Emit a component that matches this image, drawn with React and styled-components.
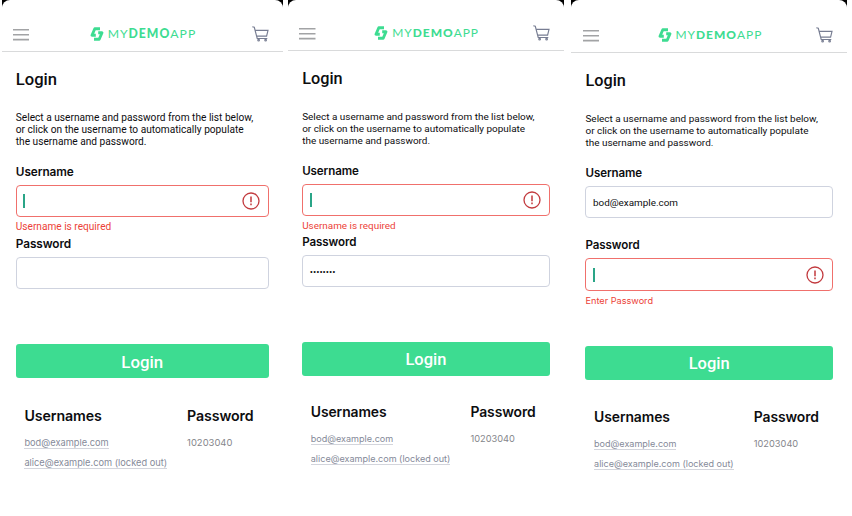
import React from "react";
import styled, { createGlobalStyle, css } from "styled-components";

const GlobalStyle = createGlobalStyle`
  *, *::before, *::after { box-sizing: border-box; }
  body { margin: 0; background: #fff; }
`;

const Gallery = styled.main`
  display: flex;
  width: 852px;
  height: 516px;
  overflow: hidden;
  padding-left: 1.6px;
  background: #fff;
  color: #0d0d0f;
  font-family: Roboto, "Liberation Sans", sans-serif;
`;

/* The em of a phone scales all of its type. */
const Phone = styled.section`
  flex: none;
  width: ${(p) => p.$width}px;
  margin-right: ${(p) => p.$gap}px;
  font-size: ${(p) => p.$scale * 10}px;
  background: linear-gradient(#000 5px, #fff 8px);
`;

const Screen = styled.div`
  display: grid;
  grid-template-columns: 100%;
  grid-template-rows: ${(p) => p.$rows.map((r) => `${r}px`).join(" ")};
  height: 516px;
  background: #fff;
  border-radius: 8px 8px 0 0;
`;

const Header = styled.header`
  display: flex;
  align-items: flex-end;
  justify-content: space-between;
  padding: 0 14px 9.5px 11.3px;
  border-bottom: 1px solid #d9dadb;
  svg { display: block; flex: none; }
`;

const Brand = styled.div`
  display: flex;
  align-items: center;
  gap: 4px;
  height: 14px;
  margin-bottom: 0.5px;
  margin-left: 4.5px;
  color: #3ddc91;
`;

const BrandName = styled.span`
  font: 400 1.22em/14px Lato, sans-serif;
  letter-spacing: 0.082em;
  white-space: nowrap;
  b { font-weight: 900; }
`;

const inset = css`
  margin-left: 14.2px;
  margin-right: 14.4px;
`;

const Title = styled.h1`
  ${inset}
  margin-top: 16.5px;
  margin-bottom: 0;
  font: 500 1.66em/22px Roboto, sans-serif;
`;

const Description = styled.p`
  ${inset}
  margin-top: 5px;
  margin-bottom: 0;
  font-size: 1.016em;
  line-height: 12px;
  white-space: nowrap;
`;

const Label = styled.label`
  ${inset}
  font: 600 1.18em/16px Inter, sans-serif;
  letter-spacing: -0.007em;
`;

const Field = styled.div`
  ${inset}
  display: flex;
  align-items: center;
  justify-content: space-between;
  padding: 0 7.5px 0 6.5px;
  border: 1px solid ${(p) => (p.$invalid ? "#f0706c" : "#cfd3df")};
  border-radius: 4px;
  font-size: 1.01em;
  svg { display: block; }
`;

const Caret = styled.span`
  width: 2px;
  height: 14px;
  background: #2aa587;
`;

const Dots = styled.span`
  font-size: 9.6px;
`;

const ErrorText = styled.span`
  ${inset}
  padding-top: ${(p) => (p.$inter ? 3 : 2.5)}px;
  font: ${(p) => (p.$inter ? "400 0.935em/13px Inter" : "400 1.012em/13px Roboto")}, sans-serif;
  color: #ec3f38;
`;

const LoginButton = styled.button`
  ${inset}
  padding: 2px 0 0;
  border: 0;
  border-radius: 3px;
  background: #3ddc91;
  color: #fff;
  font: 500 1.68em/1 Roboto, sans-serif;
`;

const Accounts = styled.div`
  display: grid;
  grid-template-columns: ${(p) => p.$column}px auto;
  grid-template-rows: ${(p) => p.$head}px 23px 20px;
  justify-content: start;
  align-items: end;
  padding-left: 22.8px;
  font-family: Inter, sans-serif;
`;

const ColumnTitle = styled.h2`
  margin: 0;
  font: 600 1.42em/20px Inter, sans-serif;
  letter-spacing: -0.007em;
`;

const Value = styled.span`
  color: #85868b;
  font-size: 0.945em;
  line-height: 12px;
`;

const AccountLink = styled.a`
  justify-self: start;
  border-bottom: 1px solid #d3d5dc;
  color: #858a99;
  font-size: 0.925em;
  line-height: 11px;
  white-space: nowrap;
`;

const MenuIcon = () => (
  <svg width="16.5" height="14" viewBox="0 0 16.5 14" stroke="#a2a3a5" strokeWidth="1.6">
    <path d="M0 1.8H16.5M0 6.7H16.5M0 11.6H16.5" />
  </svg>
);

const LogoMark = () => (
  <svg width="14" height="14" viewBox="0 0 14 14" fill="none" stroke="currentColor" strokeWidth="2.9" strokeLinejoin="round">
    <path d="M10 1.7H4.8L2 8.2H5.8" />
    <path d="M4 12.3H9.2L12 5.8H8.2" />
  </svg>
);

const CartIcon = () => (
  <svg width="17" height="16" viewBox="0 0 17 16" fill="none" stroke="#777d92" strokeWidth="1.15">
    <path d="M.3 .7 2.3 1.3 5.2 12.5H15.3M3.2 4.4H16L14.6 10.1H4.6" />
    <circle cx="6.6" cy="14.2" r=".8" />
    <circle cx="13.6" cy="14.2" r=".8" />
  </svg>
);

const AlertIcon = () => (
  <svg width="18" height="18" viewBox="0 0 18 18" fill="none" stroke="#c23a3e">
    <circle cx="9" cy="9" r="8" strokeWidth="1.3" />
    <path d="M9 4.6V10.2M9 11.6V13.2" strokeWidth="1.5" />
  </svg>
);

const PHONES = [
  {
    width: 281.4, gap: 5, scale: 1, column: 162.7, head: 48,
    rows: [52, 55, 57, 21, 32, 19, 21, 32, 55, 34],
    userError: "Username is required",
  },
  {
    width: 276, gap: 7.3, scale: 0.98, column: 159.7, head: 46,
    rows: [51, 55, 57, 21, 32, 18, 21, 32, 55, 34],
    userError: "Username is required", password: "••••••••",
  },
  {
    width: 276, gap: 0, scale: 0.98, column: 159.7, head: 47,
    rows: [53, 55, 57, 21, 32, 19, 21, 33, 55, 34],
    username: "bod@example.com", passwordError: "Enter Password",
  },
];

function LoginField({ error, children }) {
  return (
    <Field $invalid={!!error}>
      {error ? <Caret /> : children}
      {error && <AlertIcon />}
    </Field>
  );
}

function LoginPhone({ phone }) {
  return (
    <Phone $width={phone.width} $gap={phone.gap} $scale={phone.scale}>
      <Screen $rows={phone.rows}>
        <Header>
          <MenuIcon />
          <Brand>
            <LogoMark />
            <BrandName>MY<b>DEMO</b>APP</BrandName>
          </Brand>
          <CartIcon />
        </Header>
        <Title>Login</Title>
        <Description>
          Select a username and password from the list below,<br />
          or click on the username to automatically populate<br />
          the username and password.
        </Description>
        <Label>Username</Label>
        <LoginField error={phone.userError}>{phone.username}</LoginField>
        <ErrorText>{phone.userError}</ErrorText>
        <Label>Password</Label>
        <LoginField error={phone.passwordError}><Dots>{phone.password}</Dots></LoginField>
        <ErrorText $inter>{phone.passwordError}</ErrorText>
        <LoginButton>Login</LoginButton>
        <Accounts $column={phone.column} $head={phone.head}>
          <ColumnTitle>Usernames</ColumnTitle>
          <ColumnTitle>Password</ColumnTitle>
          <AccountLink>bod@example.com</AccountLink>
          <Value>10203040</Value>
          <AccountLink>alice@example.com (locked out)</AccountLink>
        </Accounts>
      </Screen>
    </Phone>
  );
}

export default function App() {
  return (
    <>
      <GlobalStyle />
      <Gallery>
        {PHONES.map((phone, i) => <LoginPhone key={i} phone={phone} />)}
      </Gallery>
    </>
  );
}
